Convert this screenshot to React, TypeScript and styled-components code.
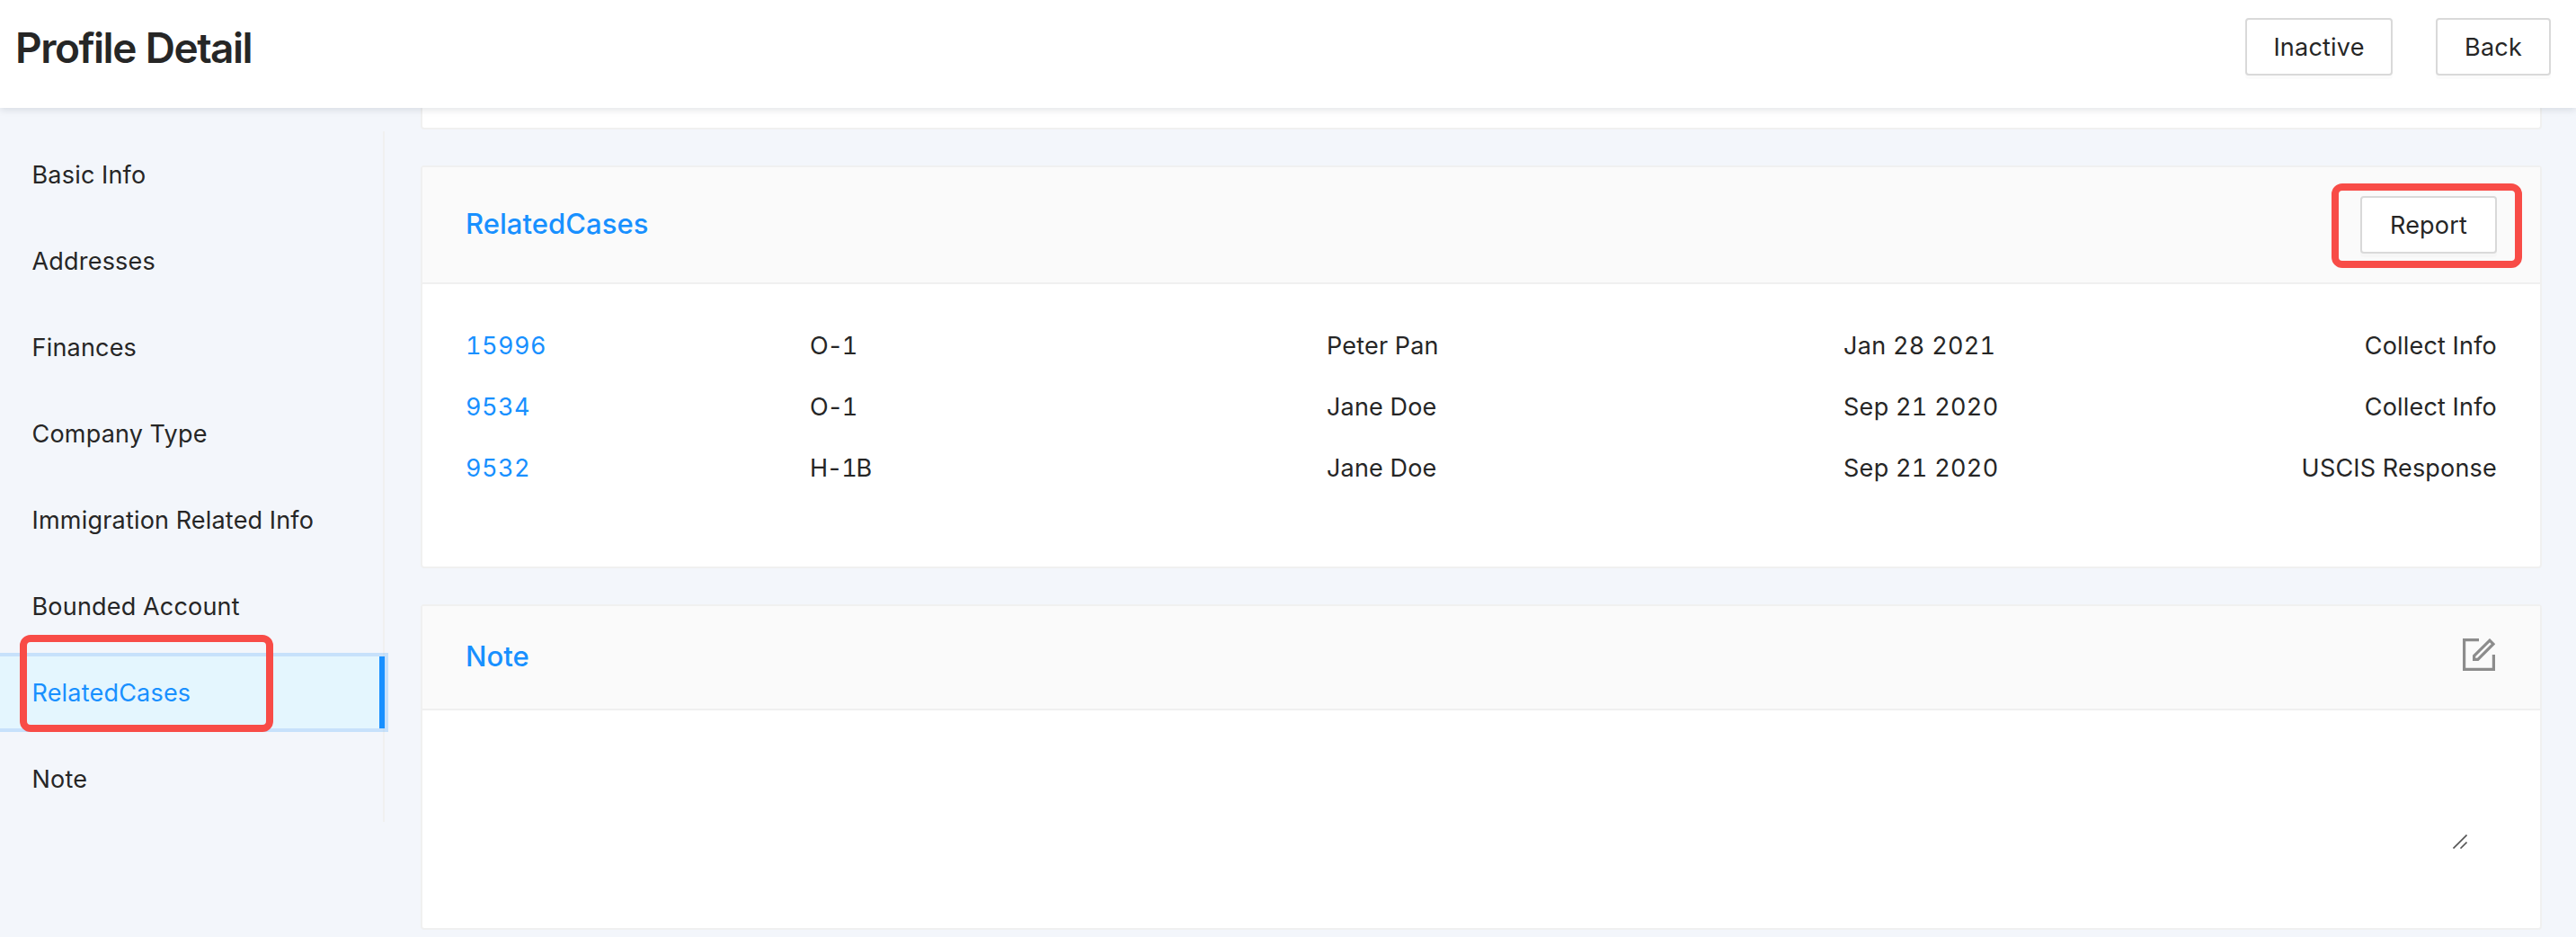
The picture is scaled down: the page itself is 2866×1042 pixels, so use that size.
import { useState } from "react";
import styled, { createGlobalStyle } from "styled-components";

const colors = {
  primary: "#1890ff",
  text: "#262626",
  page: "#f3f6fb",
  border: "#f0f0f0",
  buttonBorder: "#d9d9d9",
  selected: "#e4f6fe",
  highlight: "#f84c47",
  icon: "#8c8c8c",
};

const GlobalStyle = createGlobalStyle`
  * {
    box-sizing: border-box;
  }

  body {
    margin: 0;
    background: ${colors.page};
    color: ${colors.text};
    font-family: Inter, "Liberation Sans", sans-serif;
    font-size: 27px;
    letter-spacing: 0.2px;
    font-variant-numeric: tabular-nums;
  }
`;

const Page = styled.div`
  display: flex;
  flex-direction: column;
  height: 1042px;
  overflow: hidden;
`;

const Header = styled.header`
  position: relative;
  z-index: 1;
  display: flex;
  flex: none;
  justify-content: space-between;
  align-items: flex-start;
  height: 120px;
  padding: 20px 28px 0 17px;
  background: #fff;
  box-shadow: 0 2px 8px rgba(0, 21, 41, 0.12);
`;

const PageTitle = styled.h1`
  margin: 0;
  font-size: 46px;
  font-weight: 570;
  line-height: 66px;
  letter-spacing: -1.5px;
`;

const Actions = styled.div`
  display: flex;
  gap: 48px;
`;

const Button = styled.button<{ $width: number }>`
  display: block;
  width: ${(p) => p.$width}px;
  height: 64px;
  padding: 0;
  border: 2px solid ${colors.buttonBorder};
  border-radius: 4px;
  background: #fff;
  box-shadow: 0 4px 0 rgba(0, 0, 0, 0.016);
  color: inherit;
  font: inherit;
  letter-spacing: inherit;
  white-space: nowrap;
`;

const Body = styled.div`
  display: flex;
  align-items: flex-start;
`;

const Menu = styled.ul`
  display: flex;
  flex: none;
  flex-direction: column;
  gap: 16px;
  width: 428px;
  margin: 26px 0 0;
  padding: 8px 0;
  list-style: none;
  box-shadow: inset -2px 0 0 ${colors.border};
`;

const MenuItem = styled.li<{ $selected: boolean }>`
  position: relative;
  height: 80px;
  padding-left: 35.5px;
  line-height: 82px;
  cursor: pointer;
  ${(p) =>
    p.$selected &&
    `
    border-right: 6px solid ${colors.primary};
    background: ${colors.selected};
    box-shadow: 0 0 0 4px rgba(24, 144, 255, 0.2);
    color: ${colors.primary};
  `}
`;

const Highlight = styled.span`
  position: absolute;
  border: 8px solid ${colors.highlight};
  border-radius: 12px;
  pointer-events: none;
`;

const MenuHighlight = styled(Highlight)`
  top: -24px;
  left: 22px;
  width: 282px;
  height: 108px;
`;

const ReportHighlight = styled(Highlight)`
  inset: -14px -28px -16px -32px;
`;

const ReportSlot = styled.div`
  position: relative;
`;

const Content = styled.main`
  display: flex;
  flex: 1;
  flex-direction: column;
  gap: 40px;
  padding: 0 38px 0 40px;
`;

const Card = styled.section<{ $height: number }>`
  display: flex;
  flex-direction: column;
  height: ${(p) => p.$height}px;
  border: 2px solid ${colors.border};
  border-radius: 4px;
  background: #fff;
`;

const CardTail = styled(Card)`
  border-top: none;
  border-radius: 0 0 4px 4px;
`;

const CardHead = styled.div<{ $height: number }>`
  display: flex;
  flex: none;
  justify-content: space-between;
  align-items: center;
  height: ${(p) => p.$height}px;
  padding: 0 48px;
  border-bottom: 2px solid ${colors.border};
  background: #fafafa;
`;

const CardTitle = styled.h2`
  margin: 0;
  padding-bottom: 2px;
  color: ${colors.primary};
  font-size: 31px;
  font-weight: 550;
  line-height: 48px;
  letter-spacing: 0.05px;
`;

const IconButton = styled.button`
  display: flex;
  margin: -6px 2px 0 0;
  padding: 0;
  border: none;
  background: none;
  color: ${colors.icon};
`;

const CaseList = styled.div`
  padding: 35px 48px 0;
`;

const CaseRow = styled.div`
  display: grid;
  grid-template-columns: 383px 575px 575px 1fr auto;
  line-height: 68px;
`;

const CaseLink = styled.a`
  color: ${colors.primary};
  letter-spacing: 0.5px;
`;

const VisaType = styled.span`
  letter-spacing: -1.2px;
`;

const CaseDate = styled.span`
  letter-spacing: 0.3px;
`;

const NoteBody = styled.div`
  display: flex;
  flex: 1;
  justify-content: flex-end;
  align-items: flex-end;
  padding: 0 81px 88px 48px;
`;

const menu = [
  "Basic Info",
  "Addresses",
  "Finances",
  "Company Type",
  "Immigration Related Info",
  "Bounded Account",
  "RelatedCases",
  "Note",
];

const cases = [
  { id: "15996", type: "O-1", name: "Peter Pan", date: "Jan 28 2021", status: "Collect Info" },
  { id: "9534", type: "O-1", name: "Jane Doe", date: "Sep 21 2020", status: "Collect Info" },
  { id: "9532", type: "H-1B", name: "Jane Doe", date: "Sep 21 2020", status: "USCIS Response" },
];

function EditIcon() {
  return (
    <svg width="36" height="36" viewBox="0 0 36 36" fill="none" stroke="currentColor" strokeWidth="3.2">
      <path d="M18 1.6H1.6v32.8h32.8V18" />
      <path d="M12.6 19.4 30 2.2l4 4-17.2 17.2h-4.2z" />
    </svg>
  );
}

// Grip in the corner of the note text area
function ResizeGrip() {
  return (
    <svg width="16" height="16" viewBox="0 0 16 16" fill="none" stroke="#555" strokeWidth="1.6">
      <path d="M.5 15.5l15-15M8.5 15.5l7-7" />
    </svg>
  );
}

export default function App() {
  const [selected, setSelected] = useState("RelatedCases");

  return (
    <Page>
      <GlobalStyle />
      <Header>
        <PageTitle>Profile Detail</PageTitle>
        <Actions>
          <Button $width={164}>Inactive</Button>
          <Button $width={128}>Back</Button>
        </Actions>
      </Header>
      <Body>
        <Menu>
          {menu.map((label) => (
            <MenuItem
              key={label}
              $selected={label === selected}
              onClick={() => setSelected(label)}
            >
              {label}
              {label === "RelatedCases" && <MenuHighlight />}
            </MenuItem>
          ))}
        </Menu>
        <Content>
          <CardTail $height={24} />
          <Card $height={448}>
            <CardHead $height={130}>
              <CardTitle>RelatedCases</CardTitle>
              <ReportSlot>
                <Button $width={152}>Report</Button>
                <ReportHighlight />
              </ReportSlot>
            </CardHead>
            <CaseList>
              {cases.map((c) => (
                <CaseRow key={c.id}>
                  <CaseLink>{c.id}</CaseLink>
                  <VisaType>{c.type}</VisaType>
                  <span>{c.name}</span>
                  <CaseDate>{c.date}</CaseDate>
                  <span>{c.status}</span>
                </CaseRow>
              ))}
            </CaseList>
          </Card>
          <Card $height={362}>
            <CardHead $height={116}>
              <CardTitle>Note</CardTitle>
              <IconButton aria-label="Edit">
                <EditIcon />
              </IconButton>
            </CardHead>
            <NoteBody>
              <ResizeGrip />
            </NoteBody>
          </Card>
        </Content>
      </Body>
    </Page>
  );
}
